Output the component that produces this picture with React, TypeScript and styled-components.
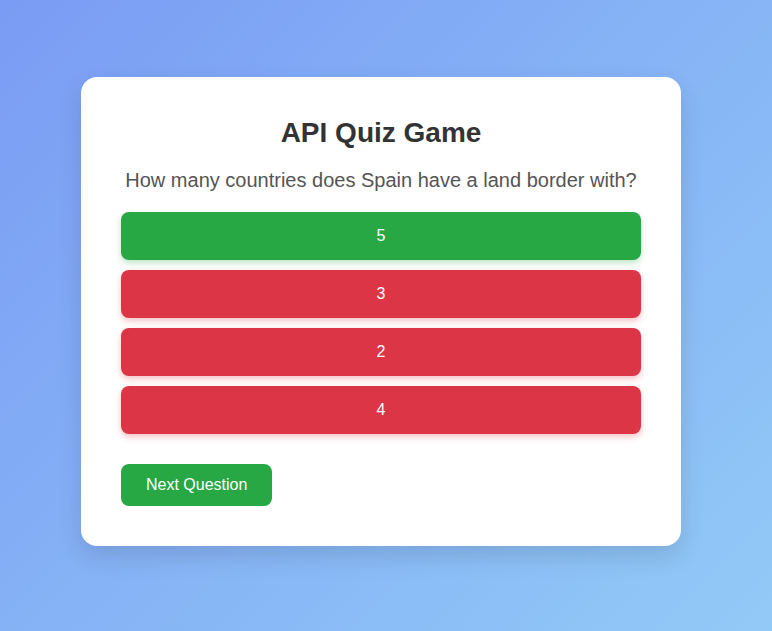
import React from "react";
import styled, { createGlobalStyle } from "styled-components";

const GlobalStyle = createGlobalStyle`
  html, body {
    margin: 0;
    padding: 0;
  }
  body {
    font-family: "Liberation Sans", Arial, sans-serif;
    background: linear-gradient(135deg, #7a9cf4 0%, #92caf7 100%);
    min-height: 100vh;
  }
`;

const Page = styled.div`
  min-height: 100vh;
  box-sizing: border-box;
  display: flex;
  align-items: center;
  justify-content: center;
  padding: 0 10px 8px 0;
`;

const Card = styled.div`
  width: 600px;
  box-sizing: border-box;
  background: #ffffff;
  border-radius: 16px;
  padding: 40px;
  box-shadow: 0 10px 25px rgba(0, 0, 0, 0.12);
  text-align: center;
`;

const Title = styled.h1`
  margin: 0 0 20px;
  font-size: 28px;
  font-weight: bold;
  color: #333333;
`;

const Question = styled.p`
  margin: 0 0 20px;
  font-size: 20px;
  color: #555555;
`;

const Options = styled.div`
  display: flex;
  flex-direction: column;
  gap: 10px;
`;

const Option = styled.button<{ $correct: boolean }>`
  height: 48px;
  width: 100%;
  border: none;
  border-radius: 8px;
  font-family: "Liberation Sans", Arial, sans-serif;
  font-size: 16px;
  color: #ffffff;
  background: ${(p) => (p.$correct ? "#28a745" : "#dc3545")};
  box-shadow: 0 3px 6px
    ${(p) => (p.$correct ? "rgba(40, 167, 69, 0.3)" : "rgba(220, 53, 69, 0.3)")};
  cursor: pointer;
`;

const Footer = styled.div`
  display: flex;
  margin-top: 30px;
`;

const NextButton = styled.button`
  height: 42px;
  padding: 0 25px;
  border: none;
  border-radius: 8px;
  background: #28a745;
  color: #ffffff;
  font-family: "Liberation Sans", Arial, sans-serif;
  font-size: 16px;
  cursor: pointer;
`;

const options = [
  { label: "5", correct: true },
  { label: "3", correct: false },
  { label: "2", correct: false },
  { label: "4", correct: false },
];

export default function App() {
  return (
    <>
      <GlobalStyle />
      <Page>
        <Card>
          <Title>API Quiz Game</Title>
          <Question>How many countries does Spain have a land border with?</Question>
          <Options>
            {options.map((o) => (
              <Option key={o.label} $correct={o.correct}>
                {o.label}
              </Option>
            ))}
          </Options>
          <Footer>
            <NextButton>Next Question</NextButton>
          </Footer>
        </Card>
      </Page>
    </>
  );
}
